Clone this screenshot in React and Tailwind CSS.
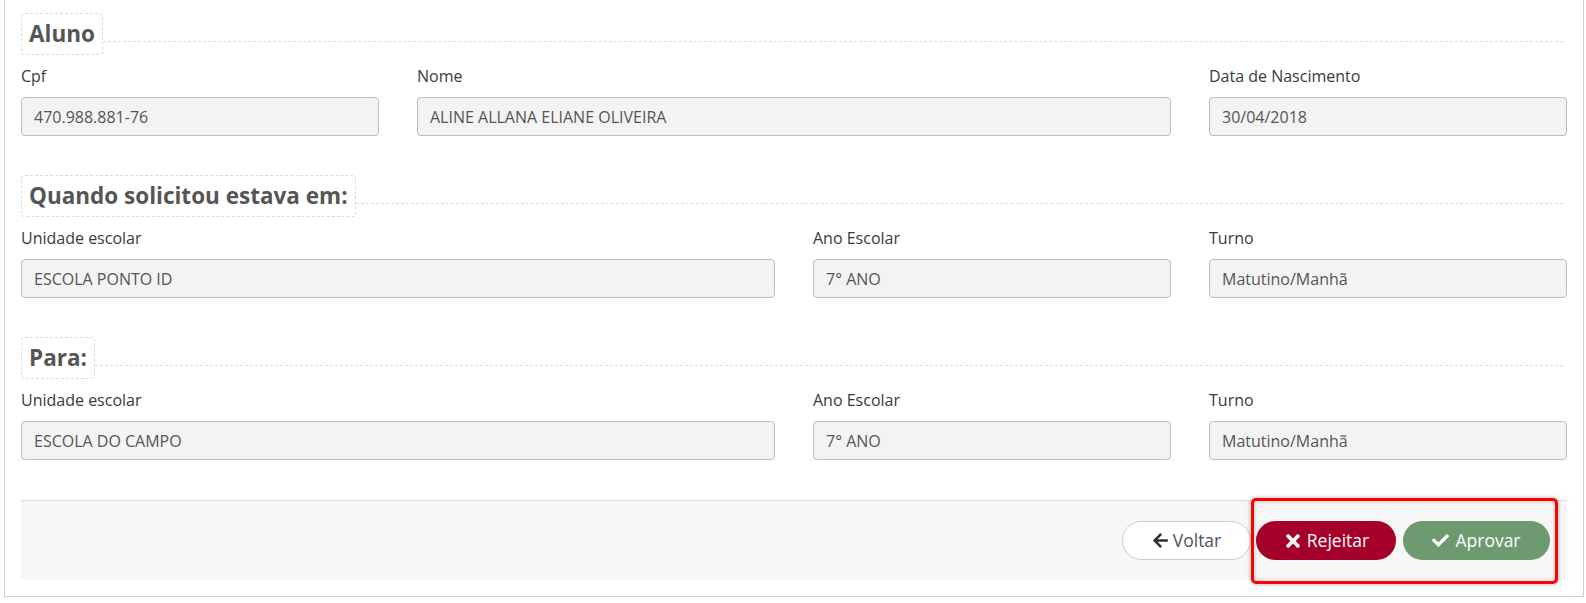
import { FaArrowLeft, FaTimes, FaCheck } from 'react-icons/fa';

const sections = [
  {
    title: 'Aluno',
    fields: [
      { label: 'Cpf', value: '470.988.881-76', span: 'col-span-1' },
      { label: 'Nome', value: 'ALINE ALLANA ELIANE OLIVEIRA', span: 'col-span-2' },
      { label: 'Data de Nascimento', value: '30/04/2018', span: 'col-span-1' },
    ],
  },
  {
    title: 'Quando solicitou estava em:',
    fields: [
      { label: 'Unidade escolar', value: 'ESCOLA PONTO ID', span: 'col-span-2' },
      { label: 'Ano Escolar', value: '7° ANO', span: 'col-span-1' },
      { label: 'Turno', value: 'Matutino/Manhã', span: 'col-span-1' },
    ],
  },
  {
    title: 'Para:',
    fields: [
      { label: 'Unidade escolar', value: 'ESCOLA DO CAMPO', span: 'col-span-2' },
      { label: 'Ano Escolar', value: '7° ANO', span: 'col-span-1' },
      { label: 'Turno', value: 'Matutino/Manhã', span: 'col-span-1' },
    ],
  },
];

function Section({ title, fields }) {
  return (
    <div>
      <div className="flex items-start">
        <div className="h-[42px] px-[7px] border border-dashed border-[#dcdcdc] rounded-[4px] text-[22.5px] leading-[40px] font-bold text-[#555]">
          {title}
        </div>
        <div className="flex-1 mt-[28px] mr-[4px] border-t border-dashed border-[#dedede]" />
      </div>
      <div className="grid grid-cols-4 gap-x-[38px]">
        {fields.map((f, i) => (
          <div key={i} className={f.span}>
            <div className="mt-[11px] h-[21px] text-[16px] leading-[21px] text-[#3a3a3a]">{f.label}</div>
            <div className="mt-[10px] h-[39px] flex items-center px-[12px] bg-[#f3f3f3] border border-[#bdbdbd] rounded-[4px] text-[16px] text-[#555]">
              {f.value}
            </div>
          </div>
        ))}
      </div>
    </div>
  );
}

export default function App() {
  return (
    <div className="bg-white min-h-[603px]" style={{ fontFamily: '"Open Sans", "Liberation Sans", sans-serif' }}>
      <div className="ml-[4px] w-[1580px] border-x border-b border-[#cfcfcf] px-[16px] pt-[13px] pb-[16px]">
        <div className="flex flex-col gap-[39px]">
          {sections.map((s, i) => (
            <Section key={i} {...s} />
          ))}
        </div>

        <div className="relative mt-[40px] h-[80px] bg-[#f7f7f7] border-t border-[#dddddd] flex items-center justify-end pr-[17px]">
          <button className="h-[39px] w-[129px] flex items-center justify-center gap-[4px] bg-white border border-[#cccccc] rounded-full text-[17.5px] text-[#4a5563]">
            <FaArrowLeft className="text-[17px] text-[#2f2f2f]" />
            <span>Voltar</span>
          </button>
          <button className="ml-[5px] h-[39px] w-[140px] flex items-center justify-center gap-[4px] bg-[#a5002a] rounded-full text-[17.5px] text-white">
            <FaTimes className="text-[20px]" />
            <span>Rejeitar</span>
          </button>
          <button className="ml-[7px] h-[39px] w-[147px] flex items-center justify-center gap-[6px] bg-[#6e9a70] rounded-full text-[17.5px] text-white">
            <FaCheck className="text-[17px]" />
            <span>Aprovar</span>
          </button>
          <div className="absolute top-[-3px] right-[9px] w-[307px] h-[86px] border-[3px] border-[#ff0000] rounded-[5px] shadow-[0_0_4px_rgba(0,0,0,0.35),inset_0_0_4px_rgba(0,0,0,0.25)] pointer-events-none" />
        </div>
      </div>
    </div>
  );
}
